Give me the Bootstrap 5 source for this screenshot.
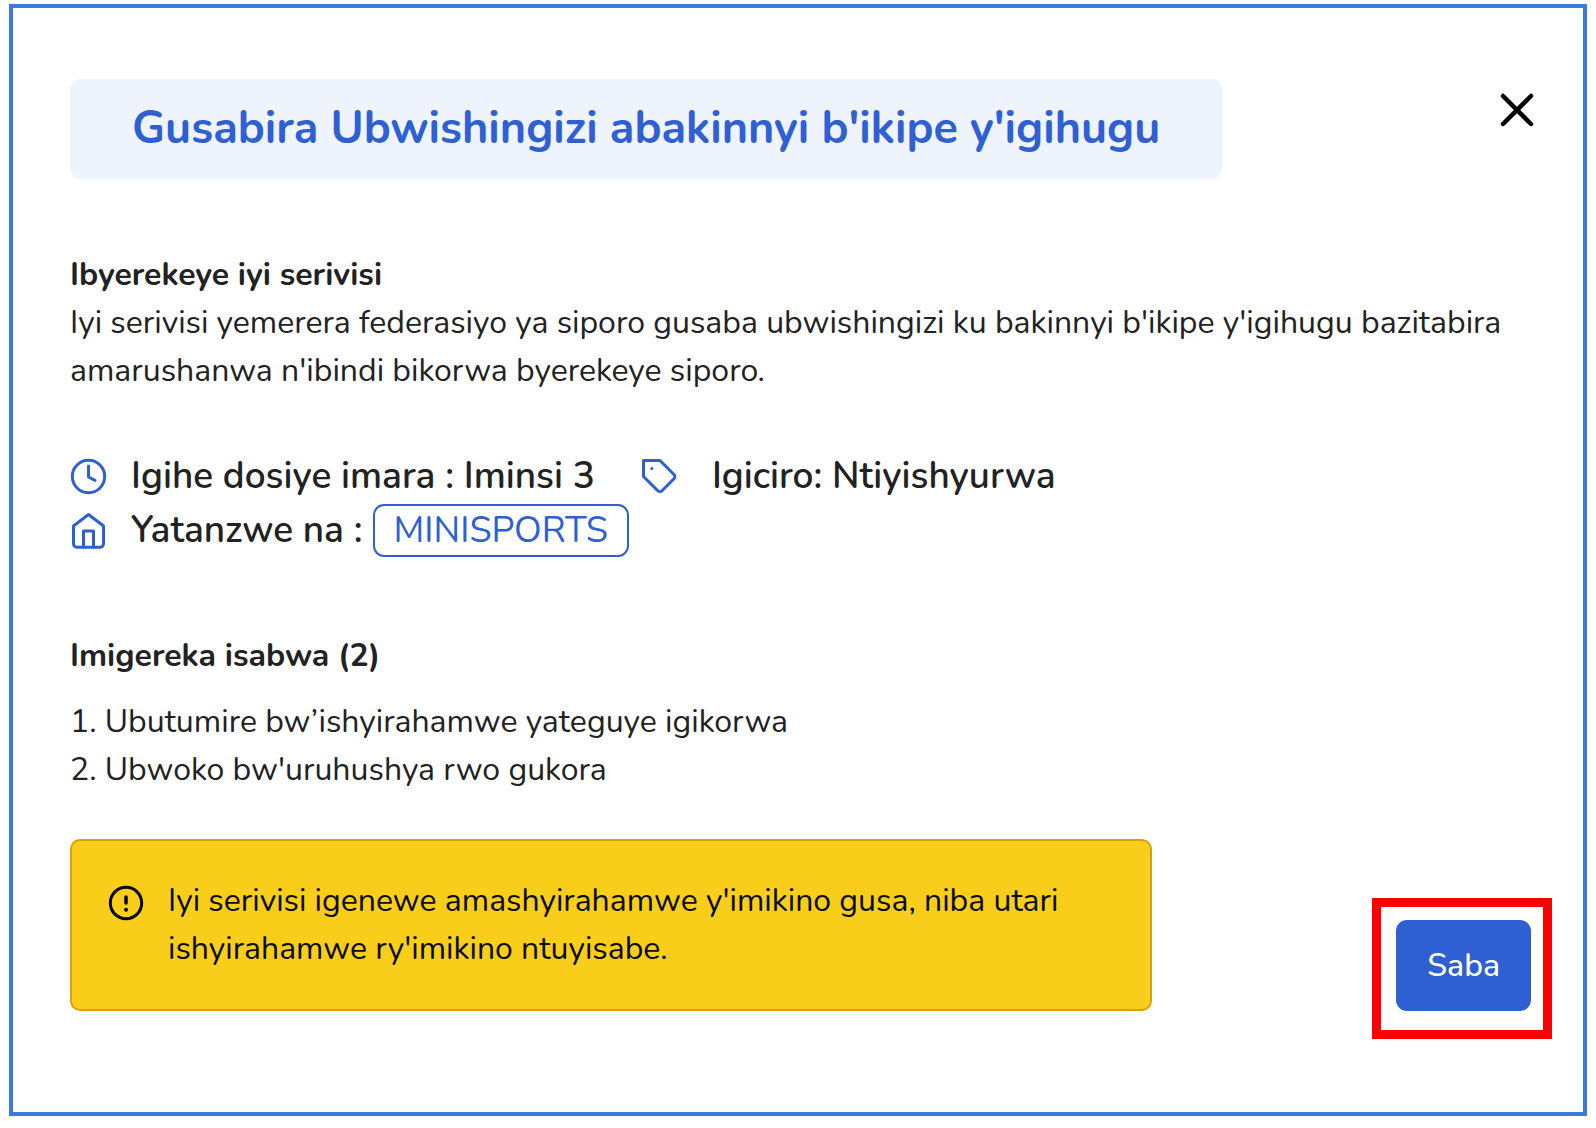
<!DOCTYPE html>
<html lang="rw">
<head>
<meta charset="utf-8">
<meta name="viewport" content="width=device-width, initial-scale=1">
<title>Gusabira Ubwishingizi abakinnyi b'ikipe y'igihugu</title>
<link href="https://cdn.jsdelivr.net/npm/bootstrap@5.3.0/dist/css/bootstrap.min.css" rel="stylesheet">
<style>
  :root { --brand: #2e60d3; --ink: #222; }
  body { font-family: Nunito, Lato, "Liberation Sans", sans-serif; font-size: 32px; font-weight: 400; line-height: 48px; color: var(--ink); background: #fff; }
  .service-dialog { margin: 4px 9px; border: 4px solid #3d79d8; padding: 71px 52px 101px 57px; }
  .service-title { font-size: 45px; font-weight: 700; line-height: 60px; color: var(--brand); background: #eef3fc; padding: 20px 62px; border-radius: 11px; }
  .close-x { padding: 11px 0; margin-right: -6px; line-height: 0; color: #000; }
  .block-title { font-size: 32px; font-weight: 700; line-height: 48px; }
  .about { margin-top: 72px; }
  .about p { padding-right: 20px; }
  .facts { margin-top: 54px; font-size: 37px; line-height: 54px; font-weight: 600; }
  .facts svg { color: var(--brand); }
  .fact-label { margin-left: 24px; }
  .fact-price { margin-left: 46px; }
  .fact-price .fact-label { margin-left: 34px; }
  .agency { font-size: 36px; font-weight: 400; line-height: 49px; color: var(--brand); border: 2px solid var(--brand); border-radius: 11px; padding: 0 19px; margin-left: 10px; text-decoration: none; }
  .papers { margin-top: 75px; }
  .papers ol { list-style-position: inside; margin-top: 18px; }
  .bottom-row { margin-top: 45px; }
  .notice { width: 1082px; color: #0b0b00; background: #f9ce1b; border: 2px solid #dc9f0c; border-radius: 10px; padding: 36px; gap: 24px; }
  .notice svg { margin-top: 8px; color: #000; }
  .apply-btn { font-size: 32px; line-height: 49px; font-weight: 500; color: #fff; background: var(--brand); border: 0; border-radius: 11px; padding: 21px 31px; }
  .apply-btn:hover { color: #fff; background: #2450b8; }
  .apply-wrap { position: relative; }
  .apply-wrap::after { content: ""; position: absolute; inset: -22px -21px -28px -24px; border: 9px solid #f00; pointer-events: none; }
</style>
</head>
<body>
<main class="service-dialog">
  <header class="d-flex justify-content-between align-items-start">
    <h1 class="service-title mb-0">Gusabira Ubwishingizi abakinnyi b'ikipe y'igihugu</h1>
    <button type="button" class="btn border-0 close-x" aria-label="Funga">
      <svg width="40" height="40" viewBox="0 0 40 40" fill="none" stroke="currentColor" stroke-width="4.5" stroke-linecap="round"><path d="M6 6 34 34M34 6 6 34"/></svg>
    </button>
  </header>

  <section class="about">
    <h2 class="block-title mb-0">Ibyerekeye iyi serivisi</h2>
    <p class="mb-0">Iyi serivisi yemerera federasiyo ya siporo gusaba ubwishingizi ku bakinnyi b'ikipe y'igihugu bazitabira amarushanwa n'ibindi bikorwa byerekeye siporo.</p>
  </section>

  <section class="facts">
    <div class="d-flex align-items-center">
      <svg width="37" height="37" viewBox="0 0 37 37" fill="none" stroke="currentColor" stroke-width="3" stroke-linecap="round" stroke-linejoin="round"><circle cx="18.500" cy="18.500" r="16.200"/><path d="M18.500 8v11l6.500 3.300"/></svg>
      <span class="fact-label">Igihe dosiye imara : Iminsi 3</span>
      <div class="fact-price d-flex align-items-center">
        <svg width="37" height="37" viewBox="0 0 37 37" fill="none" stroke="currentColor" stroke-width="3" stroke-linecap="round" stroke-linejoin="round"><path d="M2.500 2.500H19L33 16.500a3 3 0 0 1 0 4.200L21 32.700a3 3 0 0 1-4.200 0L2.500 18.500Z"/><path d="M10.800 10.500h.02"/></svg>
        <span class="fact-label">Igiciro: Ntiyishyurwa</span>
      </div>
    </div>
    <div class="d-flex align-items-center">
      <svg width="37" height="37" viewBox="0 0 37 37" fill="none" stroke="currentColor" stroke-width="3" stroke-linecap="round" stroke-linejoin="round"><path d="M3.500 14 18.500 2.500 33.500 14V32a3.200 3.200 0 0 1-3.200 3.200H6.700A3.200 3.200 0 0 1 3.500 32Z"/><path d="M13.500 35V19h10v16"/></svg>
      <span class="fact-label">Yatanzwe na :</span>
      <a href="#" class="agency">MINISPORTS</a>
    </div>
  </section>

  <section class="papers">
    <h2 class="block-title mb-0">Imigereka isabwa (2)</h2>
    <ol class="mb-0 ps-0">
      <li>Ubutumire bw’ishyirahamwe yateguye igikorwa</li>
      <li>Ubwoko bw'uruhushya rwo gukora</li>
    </ol>
  </section>

  <div class="bottom-row d-flex justify-content-between align-items-end">
    <div class="notice d-flex align-items-start" role="note">
      <svg class="flex-shrink-0" width="36" height="36" viewBox="0 0 36 36" fill="none" stroke="currentColor" stroke-width="3" stroke-linecap="round"><circle cx="18" cy="18" r="15.700"/><path d="M18 12v6" stroke-width="3.500"/><path d="M18 24.800h.02" stroke-width="4"/></svg>
      <span>Iyi serivisi igenewe amashyirahamwe y'imikino gusa, niba utari ishyirahamwe ry'imikino ntuyisabe.</span>
    </div>
    <div class="apply-wrap"><button type="button" class="btn apply-btn d-block">Saba</button></div>
  </div>
</main>
<script src="https://cdn.jsdelivr.net/npm/bootstrap@5.3.0/dist/js/bootstrap.bundle.min.js"></script>
</body>
</html>
